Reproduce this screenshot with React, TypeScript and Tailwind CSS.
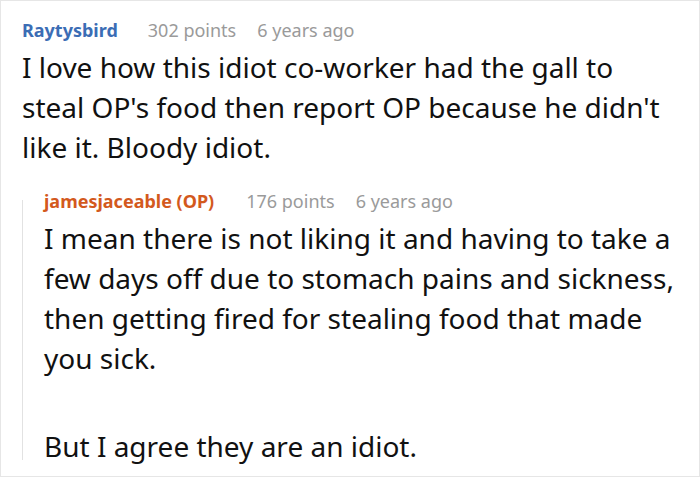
import React from "react";

const font = { fontFamily: '"Noto Sans", "Open Sans", sans-serif' };

function Meta({ name, color, points, gap }: { name: string; color: string; points: string; gap: string }) {
  return (
    <div className="flex items-baseline text-[18px] leading-[24px]">
      <span className={`font-bold ${color}`}>{name}</span>
      <span className={`${gap} text-[#9a9a9a]`}>{points}</span>
      <span className="ml-[21px] text-[#9a9a9a]">6 years ago</span>
    </div>
  );
}

export default function App() {
  return (
    <div style={font} className="w-[700px] h-[478px] bg-white overflow-hidden">
      <div className="h-[477px] border border-[#e6e6e6] pl-[21px] pr-2 pt-[17px]">
        <Meta name="Raytysbird" color="text-[#3b6db5]" points="302 points" gap="ml-[30px]" />
        <p className="mt-[5px] text-[28px] leading-[40px] text-[#111]">
          I love how this idiot co-worker had the gall to
          <br />
          steal OP's food then report OP because he didn't
          <br />
          like it. Bloody idiot.
        </p>

        <div className="mt-[22px] flex">
          <div className="mt-[11px] mb-[6px] w-px shrink-0 bg-[#e2e2e2]" />
          <div className="pl-[21px]">
            <Meta name="jamesjaceable (OP)" color="text-[#d3591d]" points="176 points" gap="ml-[32px]" />
            <p className="mt-[5px] text-[28px] leading-[40px] text-[#111]">
              I mean there is not liking it and having to take a
              <br />
              few days off due to stomach pains and sickness,
              <br />
              then getting fired for stealing food that made
              <br />
              you sick.
            </p>
            <p className="mt-[48px] text-[28px] leading-[40px] text-[#111]">
              But I agree they are an idiot.
            </p>
          </div>
        </div>
      </div>
    </div>
  );
}
